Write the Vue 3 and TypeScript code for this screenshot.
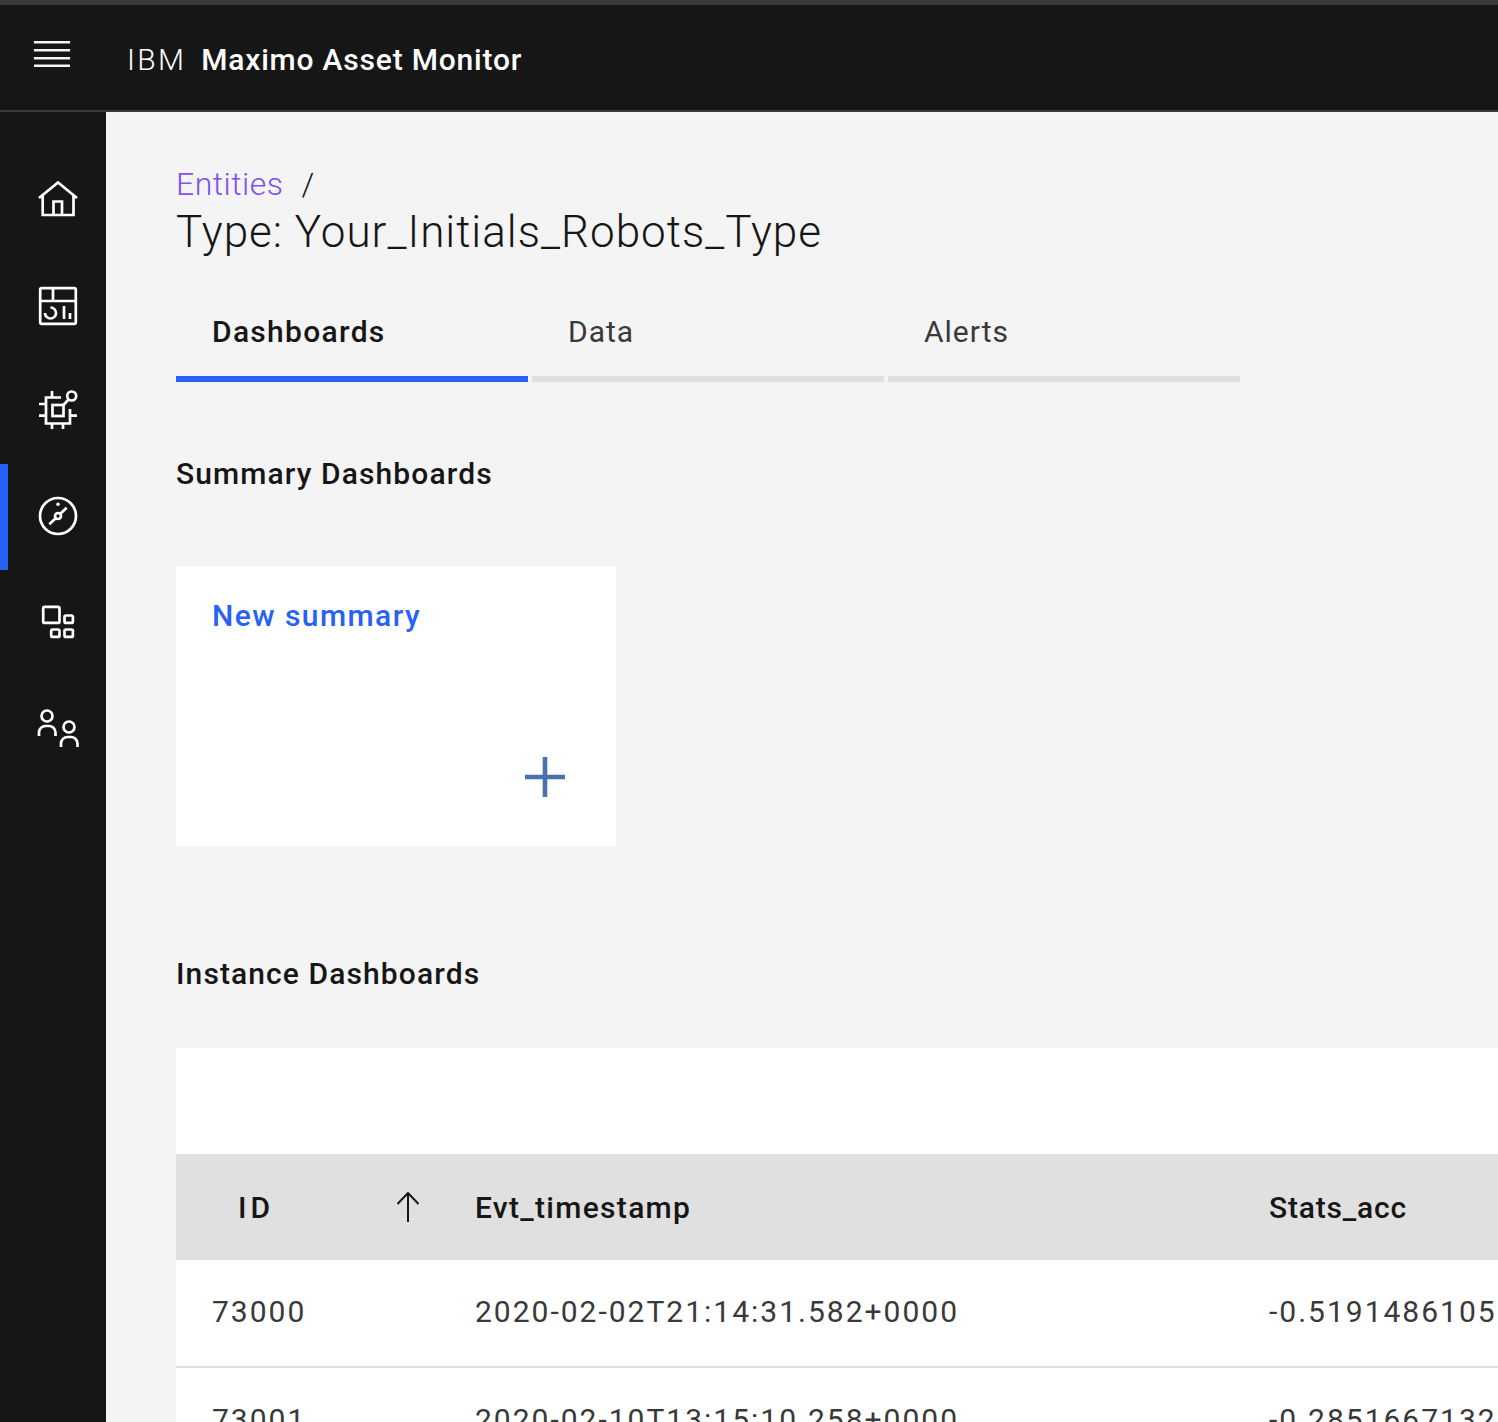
<script setup lang="ts">
interface Row {
  id: string
  timestamp: string
  acc: string
}

const tabs = ['Dashboards', 'Data', 'Alerts']

const rows: Row[] = [
  { id: '73000', timestamp: '2020-02-02T21:14:31.582+0000', acc: '-0.5191486105' },
  { id: '73001', timestamp: '2020-02-10T13:15:10.258+0000', acc: '-0.2851667132' }
]
</script>

<template>
  <div class="app">
    <header class="topbar">
      <svg class="menu-icon" width="36" height="26" viewBox="0 0 36 26" fill="none" stroke="#f4f4f4" stroke-width="2.6">
        <path d="M0 1.300h36M0 9.300h36M0 17.300h36M0 24.700h36" />
      </svg>
      <div class="brand"><span class="brand-ibm">IBM</span><span class="brand-name">Maximo Asset Monitor</span></div>
    </header>

    <div class="body">
      <nav class="sidenav">
        <a class="nav-item">
          <svg width="44" height="44" viewBox="0 0 44 44" fill="none" stroke="#fff" stroke-width="2.7">
            <path d="M3 21 22 5.500 41 21" />
            <path d="M6.700 18V38H37.500V18" />
            <path d="M17.500 38V24.500H26V38" />
          </svg>
        </a>
        <a class="nav-item">
          <svg width="44" height="44" viewBox="0 0 44 44" fill="none" stroke="#fff" stroke-width="2.7">
            <rect x="4.200" y="5.200" width="35.600" height="35.600" rx="1.500" />
            <path d="M4.200 18H39.800M17 5.200V18" />
            <path d="M14.500 24.500A5.500 5.500 0 1 1 9 30" />
            <path d="M28 23V36M34 30V36" />
          </svg>
        </a>
        <a class="nav-item">
          <svg width="44" height="44" viewBox="0 0 44 44" fill="none" stroke="#fff" stroke-width="2.7">
            <path d="M25 8.500H10V34.500H34V20" />
            <rect x="16.500" y="16" width="11" height="11" />
            <circle cx="35.700" cy="7" r="4.500" />
            <path d="M27.500 16 32.500 10.500" />
            <path d="M16 2V8.500M16 34.500V40M27 34.500V40M3 15H10M3 26.700H10M34 26.700H41" />
          </svg>
        </a>
        <a class="nav-item nav-item--active">
          <svg width="44" height="44" viewBox="0 0 44 44" fill="none" stroke="#fff" stroke-width="2.7">
            <circle cx="22" cy="21" r="18" />
            <circle cx="22" cy="21" r="3" />
            <circle cx="22" cy="9.300" r="1.800" fill="#fff" stroke="none" />
            <path d="M24 19 30.700 12.700M20 23 13.300 29.300" />
          </svg>
        </a>
        <a class="nav-item">
          <svg width="44" height="44" viewBox="0 0 44 44" fill="none" stroke="#fff" stroke-width="2.7">
            <rect x="7.200" y="5.900" width="16.300" height="16" rx="1.500" />
            <rect x="28.500" y="14.500" width="8.400" height="7.400" rx="1.500" />
            <rect x="15.200" y="28.500" width="8.300" height="7.400" rx="1.500" />
            <rect x="28.500" y="28.500" width="8.400" height="7.400" rx="1.500" />
          </svg>
        </a>
        <a class="nav-item">
          <svg width="44" height="44" viewBox="0 0 44 44" fill="none" stroke="#fff" stroke-width="2.7">
            <circle cx="11" cy="9" r="5.500" />
            <path d="M3 29V25.500A6.500 6.500 0 0 1 9.500 19H12.500A6.500 6.500 0 0 1 19.500 25.500V29" />
            <circle cx="33" cy="20" r="5.500" />
            <path d="M25 40V36.500A6.500 6.500 0 0 1 31.500 30H34.500A6.500 6.500 0 0 1 41.500 36.500V40" />
          </svg>
        </a>
      </nav>

      <main class="content">
        <div class="breadcrumb"><a class="crumb-link">Entities</a><span class="crumb-sep">/</span></div>
        <h1 class="page-title">Type: Your_Initials_Robots_Type</h1>

        <div class="tabs">
          <div v-for="(tab, i) in tabs" :key="tab" :class="['tab', { 'tab--active': i === 0 }]">{{ tab }}</div>
        </div>

        <h2 class="section-title section-title--summary">Summary Dashboards</h2>

        <div class="tile">
          <div class="tile-title">New summary</div>
          <svg class="tile-plus" width="42" height="42" viewBox="0 0 42 42" fill="none" stroke="#4a71ae" stroke-width="4.600">
            <path d="M21 1v40M1 21h40" />
          </svg>
        </div>

        <h2 class="section-title section-title--instance">Instance Dashboards</h2>

        <div class="table">
          <div class="table-toolbar"></div>
          <div class="table-head">
            <div class="col-id head-id">
              <span>ID</span>
              <svg width="24" height="30" viewBox="0 0 24 30" fill="none" stroke="#161616" stroke-width="2">
                <path d="M12 30V1M1.500 12 12 1l10.500 11" />
              </svg>
            </div>
            <div class="col-time">Evt_timestamp</div>
            <div class="col-acc">Stats_acc</div>
          </div>
          <div v-for="row in rows" :key="row.id" class="table-row">
            <div class="col-id">{{ row.id }}</div>
            <div class="col-time">{{ row.timestamp }}</div>
            <div class="col-acc">{{ row.acc }}</div>
          </div>
        </div>
      </main>
    </div>
  </div>
</template>

<style>
html,
body {
  margin: 0;
  overflow: hidden;
  background: #f4f4f4;
}
</style>

<style scoped>
.app {
  width: 1498px;
  height: 1422px;
  overflow: hidden;
  font-family: 'Roboto', 'Liberation Sans', sans-serif;
  color: #161616;
}

.topbar {
  box-sizing: border-box;
  height: 112px;
  display: flex;
  align-items: flex-start;
  background: #161616;
  border-top: 5px solid #393a3e;
  border-bottom: 2px solid #393939;
}

.menu-icon {
  margin: 36px 0 0 34px;
}

.brand {
  margin: 37px 0 0 57px;
  font-size: 30px;
  line-height: 36px;
  color: #fff;
  white-space: nowrap;
}

.brand-ibm {
  font-weight: 300;
  letter-spacing: 2.3px;
  margin-right: 15px;
}

.brand-name {
  font-weight: 500;
  letter-spacing: 0.8px;
}

.body {
  display: flex;
  height: 1310px;
}

.sidenav {
  box-sizing: border-box;
  flex: 0 0 106px;
  padding-top: 34px;
  background: #161616;
}

.nav-item {
  box-sizing: border-box;
  height: 106px;
  display: flex;
  align-items: center;
  justify-content: center;
  padding-left: 2px;
  border-left: 8px solid transparent;
}

.nav-item--active {
  border-left-color: #2662f5;
}

.content {
  flex: 1;
  min-width: 0;
  padding: 52px 0 0 70px;
  background: #f4f4f4;
}

.breadcrumb {
  height: 40px;
  font-size: 32px;
  line-height: 40px;
  font-weight: 300;
  letter-spacing: 0.5px;
  white-space: nowrap;
}

.crumb-link {
  color: #8050f0;
}

.crumb-sep {
  margin-left: 18px;
}

.page-title {
  margin: 0;
  height: 54px;
  font-size: 44px;
  line-height: 56px;
  font-weight: 300;
  letter-spacing: 1px;
  white-space: nowrap;
}

.tabs {
  display: flex;
  gap: 4px;
  margin-top: 42px;
}

.tab {
  box-sizing: border-box;
  width: 352px;
  height: 82px;
  padding: 12px 0 0 36px;
  font-size: 30px;
  line-height: 40px;
  letter-spacing: 1px;
  color: #393939;
  border-bottom: 6px solid #e0e0e0;
}

.tab--active {
  font-weight: 500;
  letter-spacing: 1.3px;
  color: #161616;
  border-bottom-color: #2662f5;
}

.section-title {
  margin: 0;
  font-size: 30px;
  line-height: 40px;
  font-weight: 500;
  letter-spacing: 1.1px;
}

.section-title--summary {
  margin-top: 72px;
}

.tile {
  position: relative;
  box-sizing: border-box;
  width: 440px;
  height: 280px;
  margin-top: 72px;
  padding: 30px 36px;
  background: #fff;
}

.tile-title {
  font-size: 30px;
  line-height: 40px;
  font-weight: 500;
  letter-spacing: 1.45px;
  color: #2662f5;
}

.tile-plus {
  position: absolute;
  left: 348px;
  top: 190px;
}

.section-title--instance {
  margin-top: 108px;
}

.table {
  margin-top: 54px;
  width: 1500px;
  background: #fff;
}

.table-toolbar {
  height: 106px;
}

.table-head,
.table-row {
  display: grid;
  grid-template-columns: 299px 794px 1fr;
  align-items: center;
  white-space: nowrap;
}

.table-head {
  height: 106px;
  background: #e0e0e0;
  font-size: 30px;
  font-weight: 500;
  letter-spacing: 1.3px;
}

.table-head .col-acc {
  letter-spacing: 0.8px;
}

.table-row {
  box-sizing: border-box;
  height: 108px;
  padding-bottom: 4px;
  font-size: 30px;
  letter-spacing: 2px;
  color: #393939;
  border-bottom: 2px solid #e0e0e0;
}

.col-id {
  padding-left: 36px;
}

.head-id {
  display: flex;
  align-items: center;
  justify-content: space-between;
  padding: 0 55px 0 62px;
}

.head-id span {
  letter-spacing: 4px;
}

.col-acc {
  overflow: hidden;
}
</style>
